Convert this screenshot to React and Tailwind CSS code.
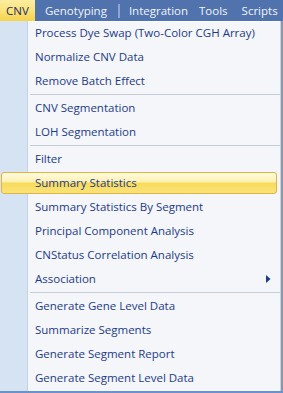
import React from "react";

const groups = [
  ["Process Dye Swap (Two-Color CGH Array)", "Normalize CNV Data", "Remove Batch Effect"],
  ["CNV Segmentation", "LOH Segmentation"],
  ["Filter", "Summary Statistics", "Summary Statistics By Segment", "Principal Component Analysis", "CNStatus Correlation Analysis", "Association"],
  ["Generate Gene Level Data", "Summarize Segments", "Generate Segment Report", "Generate Segment Level Data"],
];

function Item({ label }) {
  const hi = label === "Summary Statistics";
  const sub = label === "Association";
  return (
    <div className="relative h-[24px] flex items-center">
      {hi && (
        <div className="absolute left-[1px] right-[4px] top-[1px] bottom-[1px] rounded-[3px] border border-[#e3b440] bg-[linear-gradient(to_bottom,#fffbe0_0%,#fdf0b0_45%,#f7dc5a_50%,#fae27a_100%)]" />
      )}
      <span className="relative pl-[35px] text-[11.5px] text-[#1d3a8c] leading-none whitespace-nowrap">{label}</span>
      {sub && (
        <svg className="absolute left-[266px] top-[8px]" width="5" height="8" viewBox="0 0 5 8">
          <path d="M0 0 L4.5 4 L0 8 Z" fill="#1d3a8c" />
        </svg>
      )}
    </div>
  );
}

export default function App() {
  return (
    <div className="w-[283px] h-[393px] overflow-hidden bg-[#f4f6f9] flex flex-col" style={{ fontFamily: '"Open Sans", "Noto Sans", sans-serif' }}>
      <div className="h-[21px] bg-[#5072ad] flex items-center text-[11.5px] text-[#f2f5fb] shrink-0 whitespace-nowrap">
        <div className="h-full w-[35px] flex items-center justify-center text-[#1a2d66] bg-[linear-gradient(to_bottom,#fdeea0_0%,#fbe27a_50%,#f6d34a_100%)]">CNV</div>
        <span className="ml-[10px]">Genotyping</span>
        <div className="ml-[11px] w-[2px] h-[14px] bg-[#8ea6cf]" />
        <span className="ml-[9px]">Integration</span>
        <span className="ml-[11px]">Tools</span>
        <span className="ml-[14px]">Scripts</span>
      </div>
      <div className="flex-1 relative overflow-hidden">
        <div className="absolute left-0 top-0 bottom-0 w-[28px] bg-[#d6e3f2] border-r border-[#c3d2e4]" />
        <div className="absolute left-[28px] right-0 top-0 h-[1px] bg-[#fbfcfd]" />
        <div className="absolute right-[2px] top-0 bottom-0 w-[1px] bg-[#c9d2de]" />
        <div className="absolute right-0 top-0 bottom-0 w-[2px] bg-[#8b97a8]" />
        <div className="relative pr-[2px]">
          {groups.map((g, gi) => (
            <React.Fragment key={gi}>
              {gi > 0 && (
                <div className="h-[3px] flex items-center pl-[30px] pr-[1px]">
                  <div className="h-[1px] w-full bg-[#c5cdd8]" />
                </div>
              )}
              {g.map((l) => (
                <Item key={l} label={l} />
              ))}
            </React.Fragment>
          ))}
        </div>
        <div className="absolute left-0 right-0 bottom-0 h-[2px] bg-[#6a92cf]" />
      </div>
    </div>
  );
}
